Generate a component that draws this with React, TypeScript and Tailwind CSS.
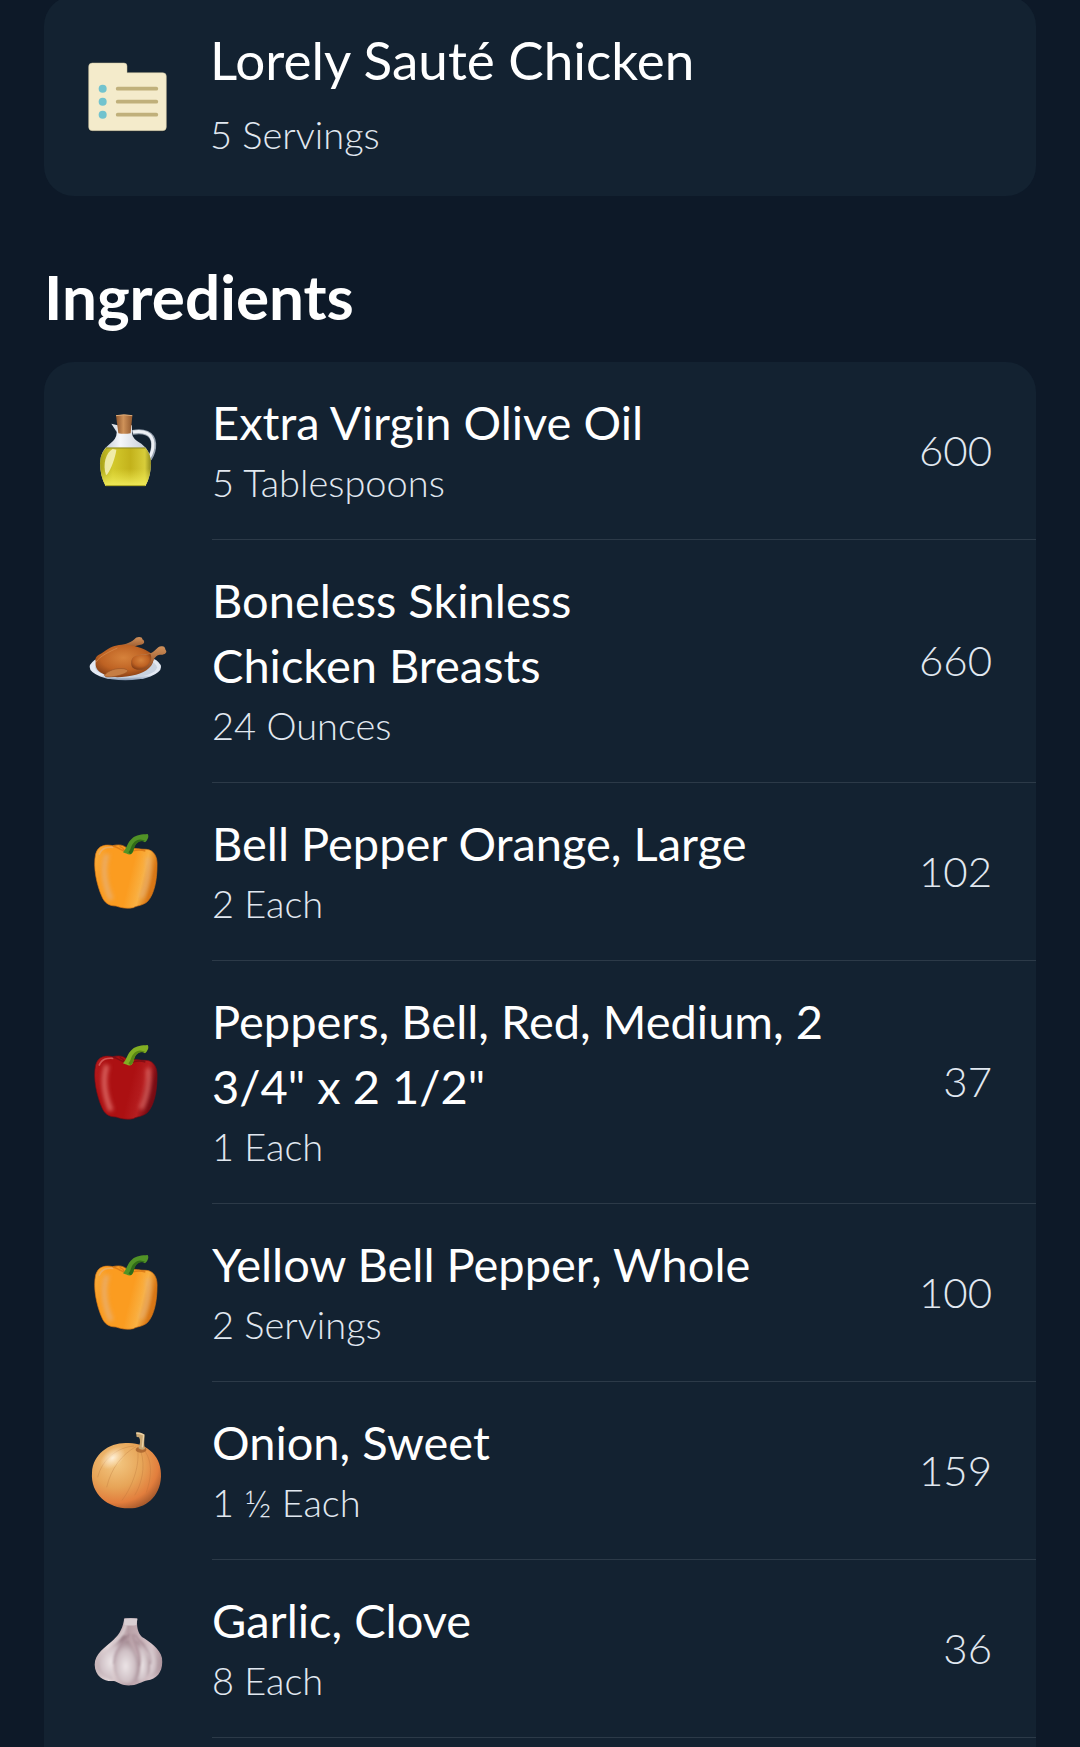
import type { ReactNode } from "react";

type ArtProps = { viewBox: string; children: ReactNode };

function Art({ viewBox, children }: ArtProps) {
  return (
    <svg viewBox={viewBox} className="h-[100px] w-[120px] shrink-0" aria-hidden="true">
      {children}
    </svg>
  );
}

function RecipeCardIcon() {
  return (
    <Art viewBox="0 13 360 300">
      <path
        d="M67 70H162Q171 70 171 79V99H278Q289 99 289 110V262Q289 273 278 273H67Q56 273 56 262V81Q56 70 67 70Z"
        fill="#0c151d"
        opacity=".55"
        transform="translate(0 4)"
      />
      <path
        d="M67 70H162Q171 70 171 79V99H278Q289 99 289 110V262Q289 273 278 273H67Q56 273 56 262V81Q56 70 67 70Z"
        fill="#f4ebcb"
        stroke="#c9c09f"
        strokeWidth="1.5"
      />
      {[147, 186, 225].map((y) => (
        <g key={y}>
          <circle cx="98" cy={y} r="12" fill="#72c3ce" />
          <path d={`M143 ${y}H259`} stroke="#c0b07b" strokeWidth="11" strokeLinecap="round" />
        </g>
      ))}
    </Art>
  );
}

function OliveOilIcon() {
  return (
    <Art viewBox="0 3 360 300">
      <defs>
        <linearGradient id="oil" x1="0" x2="1">
          <stop offset="0" stopColor="#a59f18" />
          <stop offset=".25" stopColor="#d3c92c" />
          <stop offset=".6" stopColor="#c3b21b" />
          <stop offset=".88" stopColor="#d8cd3a" />
          <stop offset="1" stopColor="#8f8a1c" />
        </linearGradient>
        <linearGradient id="oilBase" x1="0" x2="0" y1="0" y2="1">
          <stop offset=".55" stopColor="#ece94a" stopOpacity="0" />
          <stop offset=".95" stopColor="#efe958" stopOpacity=".9" />
        </linearGradient>
        <linearGradient id="cork" x1="0" x2="1">
          <stop offset="0" stopColor="#8d552c" />
          <stop offset=".45" stopColor="#cf9259" />
          <stop offset="1" stopColor="#91582e" />
        </linearGradient>
        <linearGradient id="glass" x1="0" x2="1">
          <stop offset="0" stopColor="#b6bec8" />
          <stop offset=".4" stopColor="#f5f7fb" />
          <stop offset="1" stopColor="#bdc5d0" />
        </linearGradient>
      </defs>
      <path d="M188 97C220 91 249 99 251 131C252 151 247 163 238 177" fill="none" stroke="#98a3b0" strokeWidth="15" />
      <path d="M188 96C220 90 248 99 249 131C250 151 245 162 237 174" fill="none" stroke="#edf0f5" strokeWidth="9" />
      <path d="M124 71L143 76L140 96Z" fill="#dce2e9" />
      <path d="M140 76H186V98Q186 116 214 131Q243 152 243 190Q243 228 226 258H107Q90 228 90 190Q90 153 119 132Q140 116 140 98Z" fill="url(#glass)" />
      <path d="M108 143H226Q243 162 243 190Q243 228 226 258H107Q90 228 90 190Q90 162 108 143Z" fill="url(#oil)" />
      <path d="M108 143H226Q243 162 243 190Q243 228 226 258H107Q90 228 90 190Q90 162 108 143Z" fill="url(#oilBase)" />
      <path d="M108 144H226" stroke="#8e8b26" strokeWidth="3" />
      <path d="M128 147C108 157 97 193 108 225C119 221 137 170 139 149Z" fill="#f6f2bd" opacity=".85" />
      <path d="M107 257H226" stroke="#a8a220" strokeWidth="3" />
      <path d="M138 47Q162 41 187 47L182 100Q162 103 145 100Z" fill="url(#cork)" />
      <path d="M138 47Q162 42 187 47" fill="none" stroke="#e0ad78" strokeWidth="3" />
    </Art>
  );
}

function ChickenIcon() {
  return (
    <Art viewBox="0 -24 360 300">
      <defs>
        <radialGradient id="roast" cx=".48" cy=".4" r=".65">
          <stop offset="0" stopColor="#d6823b" />
          <stop offset=".6" stopColor="#be6223" />
          <stop offset="1" stopColor="#803a13" />
        </radialGradient>
        <linearGradient id="leg" x1="0" x2="0" y1="0" y2="1">
          <stop offset="0" stopColor="#d0915b" />
          <stop offset="1" stopColor="#8d4b22" />
        </linearGradient>
        <linearGradient id="plate" x1="0" x2="0" y1="0" y2="1">
          <stop offset="0" stopColor="#dfe5ef" />
          <stop offset=".8" stopColor="#e5ebf5" />
          <stop offset="1" stopColor="#7e91ac" />
        </linearGradient>
      </defs>
      <ellipse cx="166" cy="141" rx="107" ry="40" fill="url(#plate)" />
      <ellipse cx="168" cy="142" rx="93" ry="31" fill="#c9d3e1" />
      <path d="M132 80C160 74 181 70 194 57C199 48 219 49 217 58C228 65 221 75 211 74C194 77 184 86 172 91Z" fill="url(#leg)" />
      <path d="M77 126C73 105 87 108 108 91C133 71 167 72 193 78C220 85 248 97 251 112C253 136 230 157 198 164C159 173 119 176 96 160C80 151 75 140 77 126Z" fill="url(#roast)" />
      <path d="M184 122C194 97 227 106 245 98C257 93 263 76 277 79C287 80 285 88 287 90C294 98 282 106 270 104C258 106 253 114 248 125C239 149 208 156 191 145Q181 139 184 122Z" fill="url(#leg)" />
      <path d="M184 124C190 98 219 108 241 102C252 122 229 151 198 148Q182 144 184 124Z" fill="url(#roast)" />
      <path d="M103 166C113 152 138 143 162 146Q183 151 165 160C142 170 120 172 107 170Z" fill="#c67d43" stroke="#9c5526" strokeWidth="2" />
      <path d="M78 127C88 108 121 94 142 84" fill="none" stroke="#dc9456" strokeWidth="3" opacity=".6" />
    </Art>
  );
}

type PepperProps = { id: string; light: string; body: string; dark: string; shine: string; stem: string; stemDark: string };

function PepperIcon({ id, light, body, dark, shine, stem, stemDark }: PepperProps) {
  return (
    <Art viewBox="0 7 360 300">
      <defs>
        <linearGradient id={`${id}-body`} x1="0" x2="1" y1="0" y2=".25">
          <stop offset="0" stopColor={light} />
          <stop offset=".2" stopColor={body} />
          <stop offset=".65" stopColor={body} />
          <stop offset=".85" stopColor={light} />
          <stop offset="1" stopColor={dark} />
        </linearGradient>
        <filter id={`${id}-soft`} x="-1" y="-1" width="3" height="3">
          <feGaussianBlur stdDeviation="6" />
        </filter>
      </defs>
      <path
        d="M77 103C85 75 109 74 128 78C148 73 161 76 173 87C193 83 212 90 229 89C252 91 263 112 261 139C261 180 253 223 233 245C219 258 202 257 190 264C169 268 151 264 138 259C118 259 103 250 95 229C81 197 68 143 77 103Z"
        fill={`url(#${id}-body)`}
        stroke={dark}
        strokeWidth="2"
      />
      <path d="M111 103C94 151 107 202 123 240" fill="none" stroke={shine} strokeWidth="16" opacity=".75" filter={`url(#${id}-soft)`} />
      <path d="M235 113C239 156 232 197 213 235" fill="none" stroke={shine} strokeWidth="15" opacity=".65" filter={`url(#${id}-soft)`} />
      <path d="M87 105C96 82 113 82 130 83" fill="none" stroke={shine} strokeWidth="5" opacity=".65" />
      <path d="M128 79C141 81 147 89 162 94M149 80Q160 84 164 93M188 94Q207 88 226 94" fill="none" stroke={dark} strokeWidth="4" opacity=".8" />
      <path d="M159 98C170 88 171 69 187 56C198 45 216 44 233 43C238 51 233 61 225 68C213 60 202 66 197 74C189 85 193 96 184 103C177 107 168 101 159 98Z" fill={stem} />
      <path d="M175 98C185 90 181 72 201 62C210 57 219 60 227 65C215 61 202 67 198 74C190 86 192 99 181 104Z" fill={stemDark} />
    </Art>
  );
}

function OrangePepperIcon({ id }: { id: string }) {
  return (
    <PepperIcon id={id} light="#f9b143" body="#fb9c20" dark="#d87614" shine="#e6b27c" stem="#519326" stemDark="#306c18" />
  );
}

function RedPepperIcon() {
  return <PepperIcon id="red" light="#b51e20" body="#ac1012" dark="#790b13" shine="#e77b76" stem="#82af23" stemDark="#5b8814" />;
}

function OnionIcon() {
  return (
    <Art viewBox="0 3 360 300">
      <defs>
        <radialGradient id="onion" cx=".35" cy=".3" r=".75">
          <stop offset="0" stopColor="#f3c883" />
          <stop offset=".5" stopColor="#e7a558" />
          <stop offset=".82" stopColor="#e27e3d" />
          <stop offset="1" stopColor="#a95b2d" />
        </radialGradient>
        <radialGradient id="onionShine">
          <stop offset="0" stopColor="#fff2dd" stopOpacity=".95" />
          <stop offset="1" stopColor="#ffe8c8" stopOpacity="0" />
        </radialGradient>
      </defs>
      <path d="M66 158C69 102 117 68 169 69C231 65 277 111 273 170C270 232 225 266 176 265C113 265 61 221 66 158Z" fill="url(#onion)" />
      <path d="M198 80C156 103 123 145 110 202M202 84C211 130 190 196 156 241M220 87C254 128 240 184 229 217M192 78C143 82 97 116 83 172M212 92C229 142 213 195 194 226" fill="none" stroke="#b36d38" strokeWidth="2.5" opacity=".35" />
      <ellipse cx="128" cy="114" rx="43" ry="27" fill="url(#onionShine)" transform="rotate(-38 128 114)" />
      <ellipse cx="213" cy="89" rx="16" ry="9" fill="#9b5726" opacity=".7" />
      <path d="M198 38C207 36 217 39 223 43C225 57 220 68 225 87Q214 92 205 84C211 72 212 61 207 52L200 51Z" fill="#caa772" />
      <path d="M199 39Q211 39 221 45L217 82" fill="none" stroke="#ead1a5" strokeWidth="4" />
    </Art>
  );
}

function GarlicIcon() {
  return (
    <Art viewBox="0 -3 360 300">
      <defs>
        <linearGradient id="garlic" x1="0" x2="1">
          <stop offset="0" stopColor="#c5b3b7" />
          <stop offset=".2" stopColor="#e5d9db" />
          <stop offset=".5" stopColor="#b79fa6" />
          <stop offset=".85" stopColor="#d8c5ca" />
          <stop offset="1" stopColor="#aa929a" />
        </linearGradient>
        <radialGradient id="clove" cx=".45" cy=".6" r=".6">
          <stop offset="0" stopColor="#ece5e7" />
          <stop offset=".6" stopColor="#cfc0c5" />
          <stop offset="1" stopColor="#9c828b" />
        </radialGradient>
        <filter id="garlicSoft">
          <feGaussianBlur stdDeviation="3" />
        </filter>
      </defs>
      <path d="M163 55H202C199 78 203 99 216 111C239 125 270 146 276 174C280 208 267 231 241 239C221 241 207 253 184 256C157 258 146 248 132 243C105 246 75 231 74 194C74 161 105 142 130 120C151 101 159 82 163 55Z" fill="url(#garlic)" />
      <g filter="url(#garlicSoft)">
        <path d="M158 106C130 143 100 149 84 180C76 211 94 234 129 240C120 192 137 143 174 107Z" fill="url(#clove)" />
        <path d="M203 112C226 140 263 149 268 184C271 214 255 229 237 234C249 191 235 150 203 112Z" fill="url(#clove)" />
        <path d="M195 118C227 145 249 178 237 220Q224 245 197 247C225 191 214 154 195 118Z" fill="url(#clove)" />
        <path d="M173 120C144 142 129 172 134 210Q141 247 172 251C207 252 217 207 202 171Q188 144 173 120Z" fill="url(#clove)" />
        <path d="M178 102C160 137 132 143 130 192M188 103C193 139 215 158 209 198M194 103C216 137 247 151 242 193" fill="none" stroke="#937380" strokeWidth="4" opacity=".6" />
        <path d="M169 59C167 91 155 108 131 130" fill="none" stroke="#ddd1d4" strokeWidth="6" />
      </g>
      <path d="M163 57Q182 52 202 57L199 75Q184 79 163 74Z" fill="#d8ced2" />
    </Art>
  );
}

type Ingredient = { name: string; amount: string; calories: number; icon: ReactNode };

const ingredients: Ingredient[] = [
  { name: "Extra Virgin Olive Oil", amount: "5 Tablespoons", calories: 600, icon: <OliveOilIcon /> },
  { name: "Boneless Skinless\nChicken Breasts", amount: "24 Ounces", calories: 660, icon: <ChickenIcon /> },
  { name: "Bell Pepper Orange, Large", amount: "2 Each", calories: 102, icon: <OrangePepperIcon id="orange" /> },
  { name: 'Peppers, Bell, Red, Medium, 2\n3/4" x 2 1/2"', amount: "1 Each", calories: 37, icon: <RedPepperIcon /> },
  { name: "Yellow Bell Pepper, Whole", amount: "2 Servings", calories: 100, icon: <OrangePepperIcon id="yellow" /> },
  { name: "Onion, Sweet", amount: "1 ½ Each", calories: 159, icon: <OnionIcon /> },
  { name: "Garlic, Clove", amount: "8 Each", calories: 36, icon: <GarlicIcon /> },
];

function IngredientRow({ name, amount, calories, icon }: Ingredient) {
  return (
    <li className="flex items-center gap-[22px] pl-[26px]">
      {icon}
      <div className="flex min-w-0 flex-1 items-center justify-between gap-6 border-b border-[#2c3a48] pt-7 pr-11 pb-[30px]">
        <div className="min-w-0">
          <h3 className="text-[47px] leading-[65px] font-normal whitespace-pre-line text-white">{name}</h3>
          <p className="text-[38px] leading-[54px] font-light text-[#e1e8f0]">{amount}</p>
        </div>
        <span className="text-[42px] leading-[54px] font-light text-[#e1e8f0]">{calories}</span>
      </div>
    </li>
  );
}

export default function App() {
  return (
    <main className="flex min-h-screen flex-col overflow-hidden bg-[#0d1928] px-11 font-['Lato',sans-serif]">
      <header className="-mt-1 flex items-center gap-5 rounded-[30px] bg-[#132231] pt-8 pr-11 pb-9 pl-[26px]">
        <RecipeCardIcon />
        <div className="flex flex-col gap-4">
          <h1 className="text-[53px] leading-[64px] font-normal text-white">Lorely Sauté Chicken</h1>
          <p className="text-[38px] leading-[52px] font-light text-[#e1e8f0]">5 Servings</p>
        </div>
      </header>
      <h2 className="mt-16 mb-[30px] text-[62px] leading-[72px] font-bold text-white">Ingredients</h2>
      <ul className="flex-1 rounded-t-[30px] bg-[#132231]">
        {ingredients.map((item) => (
          <IngredientRow key={item.name} {...item} />
        ))}
      </ul>
    </main>
  );
}
